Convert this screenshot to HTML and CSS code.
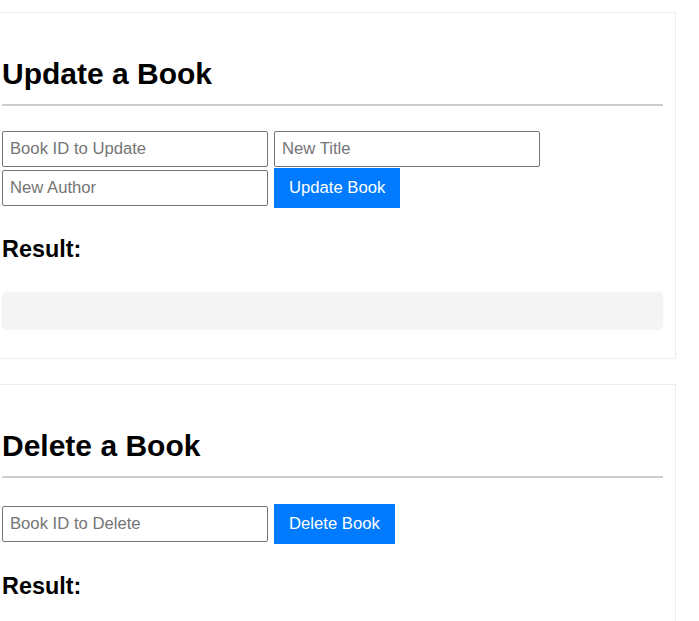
FILE: index.html
```html
<!DOCTYPE html>
<html lang="en">
<head>
<meta charset="utf-8">
<title>Books</title>
<link rel="stylesheet" href="styles.css">
</head>
<body>
  <section class="card">
    <h2 class="card-title">Update a Book</h2>
    <div class="form-row">
      <input class="field" type="text" placeholder="Book ID to Update">
      <input class="field" type="text" placeholder="New Title">
      <input class="field" type="text" placeholder="New Author">
      <button class="btn" type="button">Update Book</button>
    </div>
    <h3 class="result-title">Result:</h3>
    <pre class="result"></pre>
  </section>
  <section class="card">
    <h2 class="card-title">Delete a Book</h2>
    <div class="form-row form-row-single">
      <input class="field" type="text" placeholder="Book ID to Delete">
      <button class="btn" type="button">Delete Book</button>
    </div>
    <h3 class="result-title result-title-2">Result:</h3>
    <pre class="result"></pre>
  </section>
</body>
</html>
```

FILE: styles.css
```css
html, body {
  margin: 0;
  padding: 0;
  background: #fff;
  overflow: hidden;
}
body {
  font-family: "Liberation Sans", Arial, sans-serif;
  color: #000;
  padding-top: 12px;
}
.card {
  border: 1px solid #eee;
  margin: 0 23px 25px -19px;
  padding: 18px 12px 28px 20px;
}
.card-title {
  font-size: 30px;
  line-height: 35px;
  font-weight: bold;
  margin: 25px 0 25px 0;
  padding-bottom: 13px;
  border-bottom: 2px solid #ccc;
}
.form-row {
  display: flex;
  flex-wrap: wrap;
  align-items: center;
  column-gap: 6px;
  row-gap: 1px;
}
.form-row-single {
  padding-top: 1px;
}
.field {
  box-sizing: border-box;
  width: 266px;
  height: 36px;
  margin: 0;
  padding: 0 7px;
  border: 1px solid #767676;
  border-radius: 2px;
  font-family: "Liberation Sans", Arial, sans-serif;
  font-size: 16.67px;
  color: #000;
  background: #fff;
}
.field::placeholder {
  color: #757575;
}
.btn {
  box-sizing: border-box;
  height: 40px;
  padding: 0 15px;
  margin: 0;
  border: none;
  border-radius: 0;
  background: #007bff;
  color: #fff;
  font-family: "Liberation Sans", Arial, sans-serif;
  font-size: 16.67px;
}
.result-title {
  font-size: 23.4px;
  line-height: 27px;
  font-weight: bold;
  margin: 28px 0 29px 0;
}
.result-title-2 {
  margin-top: 29px;
}
.result {
  margin: 0;
  height: 38px;
  box-sizing: border-box;
  background: #f4f4f4;
  border-radius: 5px;
  box-shadow: 0 0 2px rgba(0, 0, 0, 0.04);
}
```
